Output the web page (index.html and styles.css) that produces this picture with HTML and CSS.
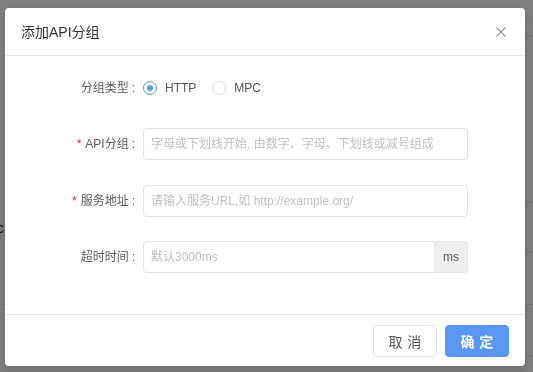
FILE: index.html
```html
<!DOCTYPE html>
<html lang="zh-CN">
<head>
<meta charset="utf-8">
<title>添加API分组</title>
<link rel="stylesheet" href="styles.css">
</head>
<body>
  <div class="page">
    <div class="page-row r1"></div>
    <div class="page-row r2"></div>
    <div class="page-row r3"><span class="cut">c</span></div>
    <div class="page-row r4"></div>
    <div class="page-row r5"></div>
  </div>
  <div class="mask"></div>
  <div class="modal">
    <div class="modal-header">
      <span class="modal-title">添加API分组</span>
      <button class="close" type="button" aria-label="关闭">
        <svg width="10" height="10" viewBox="0 0 10 10"><path d="M0.5 0.5 L9.5 9.5 M9.5 0.5 L0.5 9.5" stroke="#9a9a9a" stroke-width="1.2" fill="none"/></svg>
      </button>
    </div>
    <div class="modal-body">
      <form class="form">
        <div class="form-item">
          <label class="label">分组类型</label>
          <div class="control radios">
            <span class="radio checked"><span class="radio-circle"></span><span class="radio-text">HTTP</span></span>
            <span class="radio"><span class="radio-circle"></span><span class="radio-text">MPC</span></span>
          </div>
        </div>
        <div class="form-item">
          <label class="label req">API分组</label>
          <div class="control"><input class="input" placeholder="字母或下划线开始, 由数字、字母、下划线或减号组成"></div>
        </div>
        <div class="form-item">
          <label class="label req">服务地址</label>
          <div class="control"><input class="input" placeholder="请输入服务URL,如 http://example.org/"></div>
        </div>
        <div class="form-item">
          <label class="label">超时时间</label>
          <div class="control input-group"><input class="input" placeholder="默认3000ms"><span class="addon">ms</span></div>
        </div>
      </form>
    </div>
    <div class="modal-footer">
      <button class="btn" type="button"><span>取消</span></button>
      <button class="btn primary" type="button"><span>确定</span></button>
    </div>
  </div>
</body>
</html>
```
FILE: styles.css
```css
* { box-sizing: border-box; }
html, body { margin: 0; padding: 0; }
body {
  width: 533px;
  height: 372px;
  overflow: hidden;
  position: relative;
  background: #fff;
  font-family: "Liberation Sans", "Noto Sans CJK SC", sans-serif;
  font-size: 12px;
  color: #595959;
}

/* underlying page */
.page-row { border-bottom: 1px solid #ececec; display: flex; align-items: center; }
.r1 { height: 36px; }
.r2 { height: 167px; }
.r3 { height: 50px; }
.r4 { height: 52px; }
.r5 { height: 51px; }
.cut { margin-left: -3px; font-size: 14px; color: #333; }

.mask {
  position: fixed;
  inset: 0;
  background: rgba(0, 0, 0, 0.5);
}

/* modal */
.modal {
  position: absolute;
  left: 5px;
  top: 8px;
  width: 520px;
  background: #fff;
  border-radius: 4px;
  box-shadow: 0 4px 12px rgba(0, 0, 0, 0.15);
}
.modal-header {
  height: 48px;
  border-bottom: 1px solid #e8e8e8;
  display: flex;
  align-items: center;
  justify-content: space-between;
  padding-left: 16px;
}
.modal-title {
  font-size: 14px;
  color: #333;
  line-height: 22px;
}
.close {
  width: 48px;
  height: 47px;
  border: 0;
  background: none;
  padding: 0;
  display: flex;
  align-items: center;
  justify-content: center;
}

.modal-body { padding: 16px 0 41px; }
.form { display: flex; flex-direction: column; gap: 24.4px; margin: 0; }
.form-item { display: flex; align-items: center; height: 32px; }
.label {
  width: 138px;
  flex-shrink: 0;
  text-align: right;
  white-space: nowrap;
  line-height: 32px;
  color: #5c5c5c;
}
.label::after { content: ":"; margin: 0 8px 0 3px; }
.req::before { content: "*"; color: #f5222d; margin-right: 4px; }
.control { width: 325px; }

.radios { display: flex; align-items: center; height: 32px; }
.radio { display: inline-flex; align-items: center; margin-right: 8px; }
.radio-circle {
  width: 14px;
  height: 14px;
  border: 1px solid #dcdcdc;
  border-radius: 50%;
  display: flex;
  align-items: center;
  justify-content: center;
}
.radio.checked .radio-circle { border-color: #5898f4; }
.radio.checked .radio-circle::after {
  content: "";
  width: 6px;
  height: 6px;
  border-radius: 50%;
  background: #5898f4;
}
.radio-text { padding: 0 8px; color: #555; line-height: 20px; }

.input {
  display: block;
  width: 100%;
  height: 32px;
  border: 1px solid #e4e4e4;
  border-radius: 4px;
  padding: 0 7px;
  font-family: inherit;
  font-size: 12px;
  color: #333;
  background: #fff;
  outline: none;
}
.input::placeholder { color: #c0c0c0; }
.input-group { display: flex; }
.input-group .input { flex: 1; border-radius: 4px 0 0 4px; }
.addon {
  width: 33px;
  height: 32px;
  flex-shrink: 0;
  background: #efefef;
  border: 1px solid #e8e8e8;
  border-left: 0;
  border-radius: 0 4px 4px 0;
  display: flex;
  align-items: center;
  justify-content: center;
  color: #555;
}

.modal-footer {
  border-top: 1px solid #e8e8e8;
  padding: 10px 16px 9px;
  display: flex;
  justify-content: flex-end;
  gap: 8px;
}
.btn {
  width: 64px;
  height: 32px;
  border: 1px solid #e4e4e4;
  border-radius: 4px;
  background: #fff;
  font-family: inherit;
  font-size: 14px;
  color: #555;
  padding: 0;
  display: flex;
  align-items: center;
  justify-content: center;
}
.btn span { letter-spacing: 0.34em; margin-right: -0.34em; }
.btn.primary {
  background: #5898f4;
  border-color: #5898f4;
  color: #fff;
  font-weight: bold;
}
```
